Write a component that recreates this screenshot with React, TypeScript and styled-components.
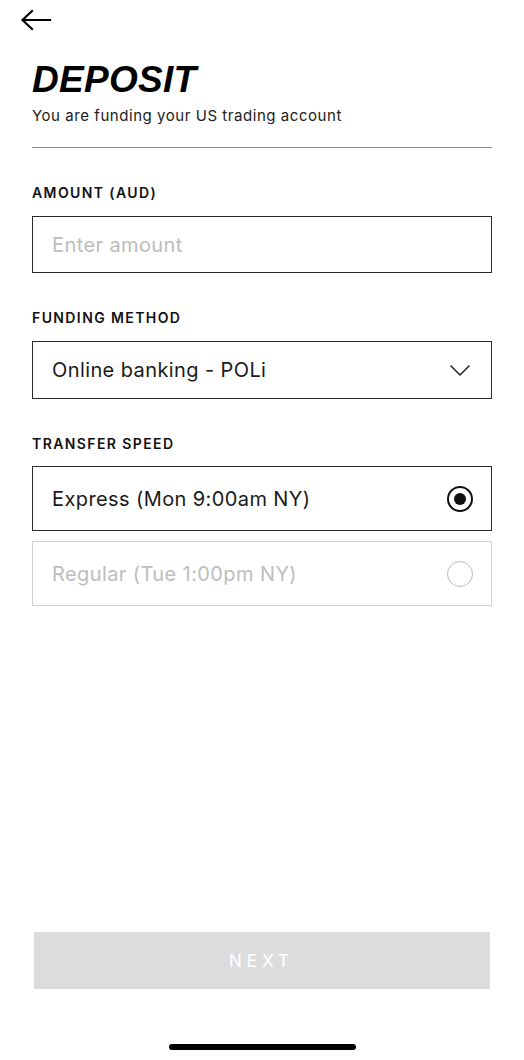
import React from "react";
import styled, { createGlobalStyle } from "styled-components";

const Global = createGlobalStyle`
  html, body { margin: 0; padding: 0; background: #fff; }
  * { box-sizing: border-box; }
  body { font-family: "Inter", "Liberation Sans", sans-serif; color: #111; }
`;

const Page = styled.div`
  width: 524px;
  height: 1060px;
  display: flex;
  flex-direction: column;
  background: #fff;
`;

const TopBar = styled.div`
  height: 40px;
  padding: 8px 0 0 20px;
`;

const BackButton = styled.button`
  border: none;
  background: none;
  padding: 0;
  width: 34px;
  height: 24px;
  display: flex;
  align-items: center;
  cursor: pointer;
`;

const Content = styled.div`
  flex: 1;
  padding: 0 32px;
  display: flex;
  flex-direction: column;
`;

const Title = styled.h1`
  margin: 18px 0 0;
  font-family: "Liberation Sans", sans-serif;
  font-style: italic;
  font-weight: 700;
  font-size: 37px;
  line-height: 44px;
  letter-spacing: 0.3px;
  color: #000;
`;

const Subtitle = styled.p`
  margin: 3px 0 0;
  font-size: 15px;
  line-height: 22px;
  color: #222;
  letter-spacing: 0.55px;
`;

const Divider = styled.hr`
  margin: 20px 0 0;
  border: none;
  border-top: 1px solid #8a8a8a;
`;

const Label = styled.div<{ $top: number }>`
  margin-top: ${(p) => p.$top}px;
  font-size: 14px;
  line-height: 18px;
  font-weight: 600;
  letter-spacing: 1.4px;
  color: #111;
`;

const Field = styled.div<{ $h: number; $muted?: boolean }>`
  margin-top: 14px;
  height: ${(p) => p.$h}px;
  border: 1.5px solid ${(p) => (p.$muted ? "#d2d2d2" : "#2a2a2a")};
  display: flex;
  align-items: center;
  justify-content: space-between;
  padding: 0 20px 0 19px;
`;

const FieldText = styled.span<{ $color: string }>`
  font-size: 20px;
  color: ${(p) => p.$color};
  letter-spacing: 0.4px;
`;

const OptionList = styled.div`
  display: flex;
  flex-direction: column;
  gap: 10px;
  margin-top: 13px;
  & > ${Field} {
    margin-top: 0;
  }
`;

const Radio = styled.span<{ $checked?: boolean }>`
  width: 26px;
  height: 26px;
  border-radius: 50%;
  border: ${(p) => (p.$checked ? "2px solid #111" : "1.5px solid #bdbdbd")};
  display: flex;
  align-items: center;
  justify-content: center;
  margin-right: -2px;
  &::after {
    content: "";
    display: ${(p) => (p.$checked ? "block" : "none")};
    width: 12px;
    height: 12px;
    border-radius: 50%;
    background: #111;
  }
`;

const Footer = styled.div`
  padding: 0 34px;
  display: flex;
  flex-direction: column;
  align-items: center;
`;

const NextButton = styled.button`
  width: 100%;
  height: 57px;
  border: none;
  background: #dcdcdc;
  color: #fff;
  font-family: "Inter", "Liberation Sans", sans-serif;
  font-size: 17px;
  letter-spacing: 5px;
  padding-left: 5px;
`;

const HomeIndicator = styled.div`
  margin-top: 55px;
  margin-bottom: 10px;
  width: 187px;
  height: 6px;
  border-radius: 3px;
  background: #000;
`;

export default function App() {
  return (
    <Page>
      <Global />
      <TopBar>
        <BackButton aria-label="Back">
          <svg width="32" height="22" viewBox="0 0 32 22" fill="none">
            <path d="M30 11H3M12 2L2.5 11L12 20" stroke="#000" strokeWidth="2.2" strokeLinecap="square" />
          </svg>
        </BackButton>
      </TopBar>
      <Content>
        <Title>DEPOSIT</Title>
        <Subtitle>You are funding your US trading account</Subtitle>
        <Divider />
        <Label $top={36}>AMOUNT (AUD)</Label>
        <Field $h={57}>
          <FieldText $color="#bdbdbd">Enter amount</FieldText>
        </Field>
        <Label $top={36}>FUNDING METHOD</Label>
        <Field $h={58}>
          <FieldText $color="#1a1a1a">Online banking - POLi</FieldText>
          <svg width="22" height="14" viewBox="0 0 22 14" fill="none">
            <path d="M1.5 2.5L11 12L20.5 2.5" stroke="#222" strokeWidth="1.5" />
          </svg>
        </Field>
        <Label $top={36}>TRANSFER SPEED</Label>
        <OptionList>
          <Field $h={65}>
            <FieldText $color="#1a1a1a">Express (Mon 9:00am NY)</FieldText>
            <Radio $checked />
          </Field>
          <Field $h={65} $muted>
            <FieldText $color="#bdbdbd">Regular (Tue 1:00pm NY)</FieldText>
            <Radio />
          </Field>
        </OptionList>
      </Content>
      <Footer>
        <NextButton>NEXT</NextButton>
        <HomeIndicator />
      </Footer>
    </Page>
  );
}
